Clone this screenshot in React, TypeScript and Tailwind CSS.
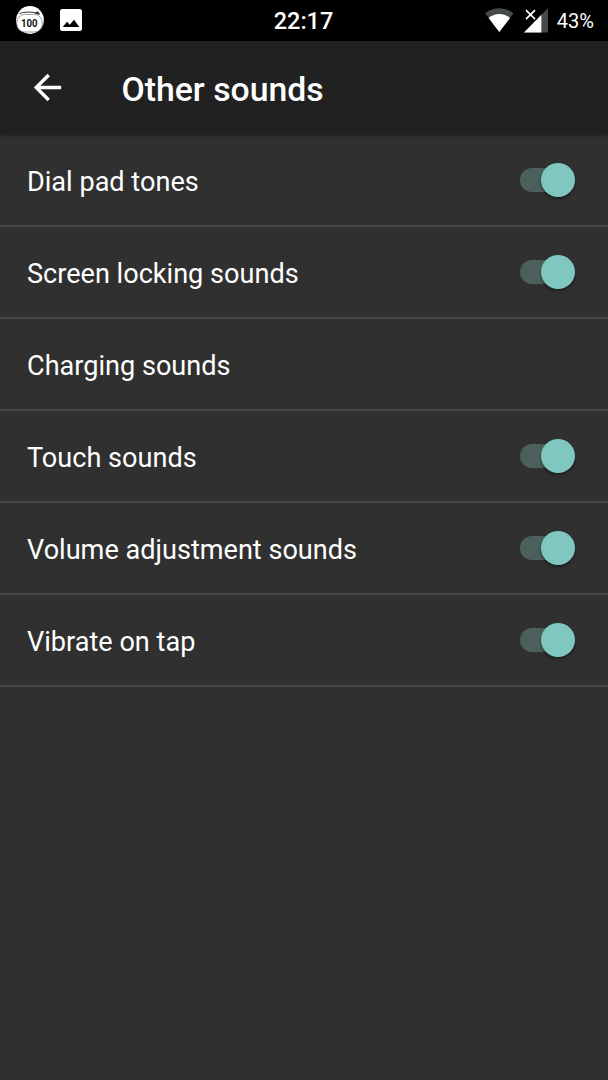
import { useState } from "react";

type SoundSetting = {
  id: string;
  label: string;
  toggle: boolean;
};

const SETTINGS: SoundSetting[] = [
  { id: "dial-pad", label: "Dial pad tones", toggle: true },
  { id: "screen-lock", label: "Screen locking sounds", toggle: true },
  { id: "charging", label: "Charging sounds", toggle: false },
  { id: "touch", label: "Touch sounds", toggle: true },
  { id: "volume", label: "Volume adjustment sounds", toggle: true },
  { id: "vibrate", label: "Vibrate on tap", toggle: true },
];

function BatteryBadge() {
  return (
    <svg width="30" height="30" viewBox="0 0 30 30" className="shrink-0">
      <circle cx="15" cy="15" r="13.9" fill="#fff" />
      <path d="M4.5 8.6C9 6.6 19 6.4 25 9.2" fill="none" stroke="#333" strokeWidth="1" />
      <path d="M19.5 8.2l3.6-2 1.4 3.6z" fill="#222" />
      <rect x="1.8" y="9.4" width="25.5" height="17.6" rx="8" fill="#fff" stroke="#777" strokeWidth="0.7" />
      <text
        x="14.2"
        y="21.6"
        textAnchor="middle"
        textLength="16.5"
        lengthAdjust="spacingAndGlyphs"
        fontSize="10.6"
        fontWeight="700"
        fontFamily="Roboto, sans-serif"
        fill="#111"
      >
        100
      </text>
    </svg>
  );
}

function ImageIcon() {
  return (
    <svg width="22" height="22" viewBox="0 0 22 22" className="shrink-0">
      <rect width="22" height="22" rx="2.5" fill="#fff" />
      <path d="M2.8 18L7 12.8l2.8 3 4.2-5 5.3 7.2z" fill="#000" />
    </svg>
  );
}

function WifiIcon() {
  return (
    <svg width="29" height="24" viewBox="0 0 29 24" className="shrink-0">
      <path d="M14.3 24L0 5.2C8.5-1.5 20.1-1.5 28.6 5.2z" fill="#464a4b" />
      <path d="M14.3 24L3.6 9.9c6.4-5.2 15-5.2 21.4 0z" fill="#fff" />
    </svg>
  );
}

function SignalIcon() {
  return (
    <svg width="24" height="25" viewBox="0 0 24 25" className="shrink-0">
      <path d="M24 0v24.5H0z" fill="#464a4b" />
      <path d="M17.4 6.7v17.8H0z" fill="#fff" />
      <path d="M0 0h12.5v12H0z" fill="#000" />
      <path d="M2 2.2l9 9M11 2.2l-9 9" stroke="#fff" strokeWidth="1.7" />
    </svg>
  );
}

function StatusBar() {
  return (
    <div className="relative flex h-[41px] items-center justify-between bg-black pr-3.5 pb-px pl-[15px] text-white">
      <div className="flex items-center gap-[15px]">
        <BatteryBadge />
        <ImageIcon />
      </div>
      <span className="absolute inset-x-0 top-px pr-px text-center text-[23.5px] leading-[41px] font-medium">
        22:17
      </span>
      <div className="flex items-center">
        <WifiIcon />
        <span className="pl-[9.5px]">
          <SignalIcon />
        </span>
        <span className="pt-0.5 pl-[9px] text-[20px] leading-[41px]">43%</span>
      </div>
    </div>
  );
}

function Switch({ checked, onChange }: { checked: boolean; onChange: () => void }) {
  return (
    <button
      role="switch"
      aria-checked={checked}
      onClick={onChange}
      className="flex h-[34px] w-[55px] items-center"
    >
      <span
        className={`flex h-6 w-12 items-center rounded-full ${checked ? "bg-[#4b5f5d]" : "bg-[#5a5a5a]"}`}
      >
        <span
          className={`size-[34px] shrink-0 rounded-full shadow-[0_2px_3px_rgba(0,0,0,0.4)] ${checked ? "ml-[21px] bg-[#80c7c0]" : "-ml-1.5 bg-[#b9b9b9]"}`}
        />
      </span>
    </button>
  );
}

function App() {
  const [enabled, setEnabled] = useState<Record<string, boolean>>({
    "dial-pad": true,
    "screen-lock": true,
    touch: true,
    volume: true,
    vibrate: true,
  });

  const toggle = (id: string) =>
    setEnabled((prev) => ({ ...prev, [id]: !prev[id] }));

  return (
    <div className="flex h-screen flex-col overflow-hidden bg-[#303030] font-[Roboto,sans-serif] text-white">
      <StatusBar />
      <header className="flex h-[94px] shrink-0 items-center bg-[#212121] pb-0.5 pl-[27px] shadow-[0_1px_4px_rgba(0,0,0,0.3)]">
        <button aria-label="Back">
          <svg width="41" height="41" viewBox="0 0 24 24" fill="#fff">
            <path d="M20 11H7.83l5.59-5.59L12 4l-8 8 8 8 1.41-1.41L7.83 13H20v-2z" />
          </svg>
        </button>
        <h1 className="pt-1.5 pl-[53.5px] text-[33.75px] leading-10 font-medium">Other sounds</h1>
      </header>

      <ul>
        {SETTINGS.map((setting) => (
          <li
            key={setting.id}
            className="flex h-[92px] items-center justify-between border-b-2 border-[#464646] pr-[33px] pl-[27px]"
          >
            <span className="pt-1 text-[27.1px] leading-8">{setting.label}</span>
            {setting.toggle && (
              <Switch
                checked={enabled[setting.id]}
                onChange={() => toggle(setting.id)}
              />
            )}
          </li>
        ))}
      </ul>
    </div>
  );
}

export default App;
